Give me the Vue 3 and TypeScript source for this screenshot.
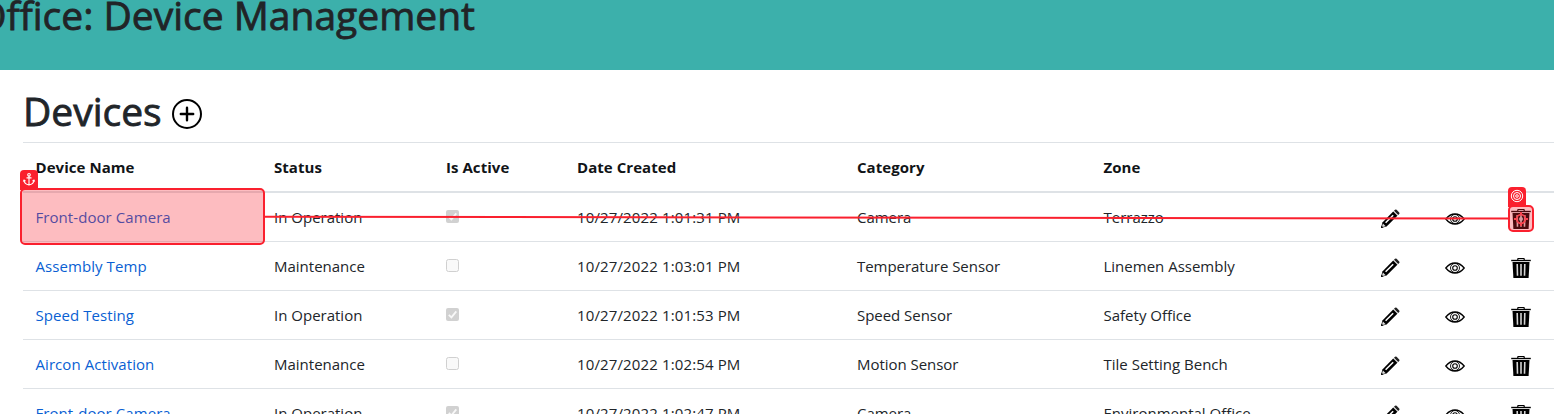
<script setup lang="ts">
interface Device {
  name: string
  status: string
  active: boolean
  created: string
  category: string
  zone: string
}

const headings: string[] = ['Device Name', 'Status', 'Is Active', 'Date Created', 'Category', 'Zone']

const devices: Device[] = [
  { name: 'Front-door Camera', status: 'In Operation', active: true, created: '10/27/2022 1:01:31 PM', category: 'Camera', zone: 'Terrazzo' },
  { name: 'Assembly Temp', status: 'Maintenance', active: false, created: '10/27/2022 1:03:01 PM', category: 'Temperature Sensor', zone: 'Linemen Assembly' },
  { name: 'Speed Testing', status: 'In Operation', active: true, created: '10/27/2022 1:01:53 PM', category: 'Speed Sensor', zone: 'Safety Office' },
  { name: 'Aircon Activation', status: 'Maintenance', active: false, created: '10/27/2022 1:02:54 PM', category: 'Motion Sensor', zone: 'Tile Setting Bench' },
  { name: 'Front-door Camera', status: 'In Operation', active: true, created: '10/27/2022 1:02:47 PM', category: 'Camera', zone: 'Environmental Office' },
]
</script>

<template>
  <div class="page">
    <header class="banner">
      <h1 class="banner-title">Office: Device Management</h1>
    </header>

    <main class="content">
      <div class="heading">
        <h1 class="title">Devices</h1>
        <svg class="add" viewBox="0 0 30 30" width="30" height="30">
          <circle cx="15" cy="15" r="14" fill="none" stroke="#000" stroke-width="2" />
          <path d="M15 8.8v12.4M8.8 15h12.4" stroke="#000" stroke-width="2.4" stroke-linecap="round" />
        </svg>
      </div>

      <div class="table">
        <div class="row head">
          <div v-for="h in headings" :key="h" class="cell">{{ h }}</div>
        </div>
        <div v-for="(d, i) in devices" :key="i" class="row">
          <div class="cell name"><a class="link">{{ d.name }}</a></div>
          <div class="cell">{{ d.status }}</div>
          <div class="cell">
            <svg class="check" viewBox="0 0 13 13" width="13" height="13">
              <template v-if="d.active">
                <rect width="13" height="13" rx="2" fill="#d1d1d1" />
                <path d="M2.8 6.8l2.6 2.6 4.9-6" fill="none" stroke="#f8f8f8" stroke-width="1.8" />
              </template>
              <rect v-else x=".5" y=".5" width="12" height="12" rx="2" fill="#f9f9f9" stroke="#d0d0d0" />
            </svg>
          </div>
          <div class="cell date">{{ d.created }}</div>
          <div class="cell category">{{ d.category }}</div>
          <div class="cell">{{ d.zone }}</div>
          <div class="cell icon">
            <svg viewBox="0 0 20 20" width="20" height="20">
              <path d="M1 19l1.4-5.6L13.2 2.6l4.2 4.2L6.6 17.6z" fill="#000" />
              <path d="M14 1.8l1-1q.8-.8 1.6 0l2.6 2.6q.8.8 0 1.6l-1 1z" fill="#222" />
              <path d="M13.3 2.3l4.4 4.4" stroke="#aaa" stroke-width=".7" />
              <path d="M5.6 13.8l7.6-7.6" stroke="#fff" stroke-width="1.5" />
              <path d="M2.9 14.4l2.8 2.8-3.2.9-.5-.5z" fill="#ddd" />
              <path d="M1 19l.6-2.3 1.7 1.7z" fill="#000" />
            </svg>
          </div>
          <div class="cell icon">
            <svg viewBox="0 0 20 20" width="20" height="20">
              <path d="M.8 10Q4.8 5 10 5t9.2 5Q15.2 15 10 15T.8 10z" fill="#fff" stroke="#000" stroke-width="1.3" />
              <circle cx="10" cy="10" r="4.5" fill="none" stroke="#000" stroke-width=".9" />
              <circle cx="10" cy="10" r="2.3" fill="#fff" stroke="#000" stroke-width="1.1" />
            </svg>
          </div>
          <div class="cell icon">
            <svg viewBox="0 0 20 20" width="20" height="20">
              <path d="M6.8 2V1.1q0-.6.6-.6h5.2q.6 0 .6.6V2" fill="none" stroke="#000" stroke-width="1.2" />
              <path d="M.2 2.5h19.6" stroke="#000" stroke-width="1.4" />
              <path d="M1.5 4h17l-.9 16H2.4z" fill="#000" />
              <path d="M6.2 6l.3 11.8M10 6v11.8M13.8 6l-.3 11.8" stroke="#d4d4d4" stroke-width="1.6" />
            </svg>
          </div>
        </div>
      </div>
    </main>

    <svg class="connector" viewBox="0 0 1554 414" width="1554" height="414">
      <path d="M264 216.7L1509 218.6" stroke="#fa202e" stroke-width="2" />
    </svg>

    <div class="marker source">
      <div class="tag">
        <svg viewBox="0 0 18 18" width="18" height="18" fill="none" stroke="#fff" stroke-width="1.1">
          <circle cx="9" cy="4.8" r="1.3" />
          <path d="M9 6.1v8.7M6.5 7.9h5M4 10.3q.3 4 5 4.6 4.7-.6 5-4.6M3.3 11.6l.8-1.5 1.5 1M14.7 11.6l-.8-1.5-1.5 1" />
        </svg>
      </div>
    </div>
    <div class="marker target">
      <div class="tag">
        <svg viewBox="0 0 18 18" width="18" height="18" fill="none" stroke="#fff" stroke-width="1">
          <circle cx="9" cy="9" r="5.7" />
          <circle cx="9" cy="9" r="3.5" />
          <circle cx="9" cy="9" r="1.3" />
        </svg>
      </div>
      <svg class="crosshair" viewBox="0 0 16 16" width="16" height="16" fill="none" stroke="#f9434e">
        <circle cx="8" cy="8" r="4.3" stroke-width="1.8" />
        <circle cx="8" cy="8" r="2" fill="#d99aa0" stroke="none" />
        <path d="M8 1v3M8 12v3M1 8h3M12 8h3" stroke-width="2" />
      </svg>
    </div>
  </div>
</template>

<style>
body { margin: 0; overflow: hidden; }
</style>

<style scoped>
.page {
  position: relative;
  width: 1554px;
  height: 414px;
  overflow: hidden;
  background: #fff;
  color: #212529;
  font-family: "Open Sans", "Noto Sans", sans-serif;
  font-size: 15px;
}
.banner {
  display: flex;
  justify-content: flex-end;
  width: 475px;
  height: 70px;
  padding-right: 1079px;
  background: #3cb0ab;
}
h1 {
  margin: 0;
  font-size: 39px;
  line-height: 48px;
  font-weight: 500;
  white-space: nowrap;
  -webkit-text-stroke: 0.8px currentColor;
}
.banner-title { margin-top: -9px; color: #212427; }
.content { padding-left: 23px; }
.heading {
  display: flex;
  align-items: center;
  gap: 10px;
  height: 72px;
  box-sizing: border-box;
  padding: 13px 0 0;
}
.title { margin-top: -3px; }
.add { margin-top: 2px; }
.table { width: 1560px; }
.row {
  display: grid;
  grid-template-columns: 238.5px 172px 131px 280px 246.5px 276.5px 65px 66px 84px;
  height: 49px;
  box-sizing: border-box;
  border-top: 1px solid #dee2e6;
}
.head {
  height: 51px;
  border-bottom: 2px solid #dee2e6;
  font-weight: 700;
  color: #111417;
  letter-spacing: 0.05px;
}
.head + .row { height: 48px; border-top: 0; }
.cell {
  display: flex;
  align-items: center;
  padding-left: 12.5px;
  white-space: nowrap;
}
.head .cell { padding-bottom: 1px; }
.name { letter-spacing: 0.07px; }
.date { letter-spacing: 0.13px; }
.category { letter-spacing: -0.04px; }
.link { color: #0a5fd3; }
.check { margin-top: -1px; }
.icon svg { margin-top: 4px; }
.connector { position: absolute; left: 0; top: 0; }
.marker {
  position: absolute;
  box-sizing: border-box;
  border: 2px solid #fa202e;
  border-radius: 5px;
  background: rgba(250, 32, 46, 0.3);
}
.source { left: 20px; top: 188px; width: 245px; height: 57px; }
.target { left: 1508px; top: 205px; width: 26px; height: 27px; }
.tag {
  position: absolute;
  left: -2px;
  top: -20px;
  width: 18px;
  height: 20px;
  border-radius: 4px 4px 0 0;
  background: #fa202e;
}
.tag svg { display: block; }
.crosshair { position: absolute; left: 3px; top: 4px; }
</style>
